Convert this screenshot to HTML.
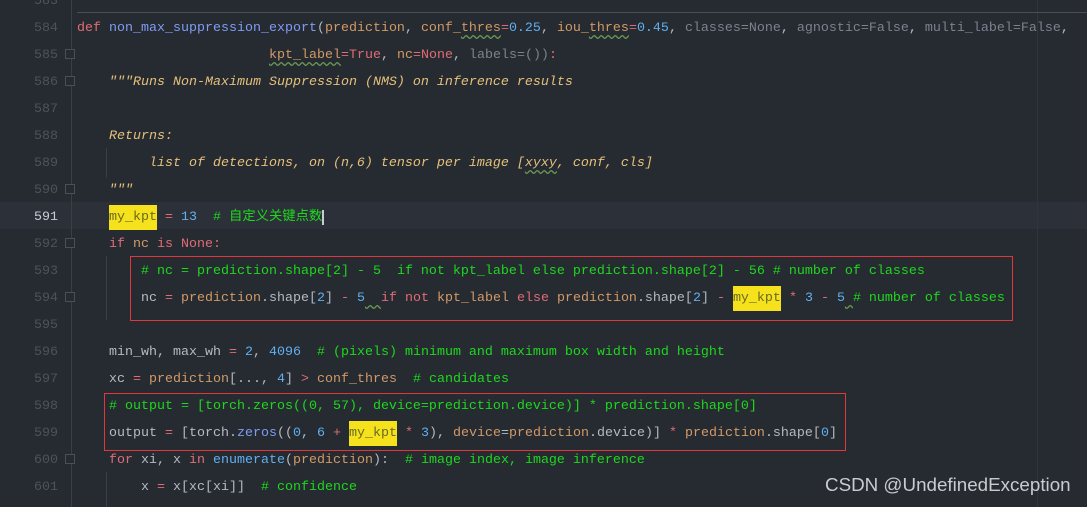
<!DOCTYPE html>
<html><head><meta charset="utf-8"><style>
html,body{margin:0;padding:0;width:1087px;height:507px;overflow:hidden;background:#262a31;}
.wrap{position:relative;width:1087px;height:507px;}
.ln{position:absolute;left:0;width:58px;text-align:right;font:13.33px "Liberation Mono",monospace;line-height:27px;color:#4d535c;height:27px;margin-top:2px;}
.code{position:absolute;left:77px;height:27px;font:13.33px "Liberation Mono","Noto Sans CJK SC",monospace;line-height:27px;color:#b4bac4;white-space:pre;margin-top:2px;}
.hl{position:absolute;left:0;width:1087px;height:27px;background:#2c3139;}
.k{color:#e06c75}.f{color:#7f9cf5}.p{color:#d19a66}.n{color:#61afef}.d{color:#e5c07b;font-style:italic}.c{color:#1ed81e}.g{color:#7b838f}.y{background:#f5e21c;color:#6b6a20;padding:5px 0}
.sq{text-decoration:underline wavy #6a9955;text-underline-offset:3px}
.box{position:absolute;border:1.5px solid #e0373a;box-sizing:border-box;}
.vline{position:absolute;width:1px;background:#3a3f47;}
.fold{position:absolute;left:65px;width:10px;height:10px;border:1px solid #4a4f57;box-sizing:border-box;background:#262a31;}
</style></head><body><div class="wrap">
<div class="hl" style="top:202px"></div>
<div class="vline" style="left:71px;top:0;height:507px"></div>
<div class="vline" style="left:1037px;top:0;height:507px;background:#30353d"></div>
<div style="position:absolute;left:77px;top:12px;width:1010px;height:1px;background:#4a4f57"></div>
<div class="vline" style="left:106px;top:148px;height:30px"></div>
<div class="vline" style="left:106px;top:256px;height:64px"></div>
<div class="vline" style="left:106px;top:472px;height:35px"></div>
<div class="fold" style="top:49px"></div><div class="fold" style="top:76px"></div>
<div class="fold" style="top:184px"></div><div class="fold" style="top:238px"></div>
<div class="fold" style="top:292px"></div><div class="fold" style="top:454px"></div>

<div class="ln" style="top:-14px">583</div>
<div class="ln" style="top:13px">584</div>
<div class="ln" style="top:40px">585</div>
<div class="ln" style="top:67px">586</div>
<div class="ln" style="top:94px">587</div>
<div class="ln" style="top:121px">588</div>
<div class="ln" style="top:148px">589</div>
<div class="ln" style="top:175px">590</div>
<div class="ln" style="top:202px;color:#c8ccd2">591</div>
<div class="ln" style="top:229px">592</div>
<div class="ln" style="top:256px">593</div>
<div class="ln" style="top:283px">594</div>
<div class="ln" style="top:310px">595</div>
<div class="ln" style="top:337px">596</div>
<div class="ln" style="top:364px">597</div>
<div class="ln" style="top:391px">598</div>
<div class="ln" style="top:418px">599</div>
<div class="ln" style="top:445px">600</div>
<div class="ln" style="top:472px">601</div>

<div class="code" style="top:13px"><span class="k">def</span> <span class="f">non_max_suppression_export</span>(<span class="p">prediction</span>, <span class="p">conf_<span class="sq">thres</span></span><span class="k">=</span><span class="n">0.25</span>, <span class="p">iou_<span class="sq">thres</span></span><span class="k">=</span><span class="n">0.45</span>, <span class="g">classes=None</span>, <span class="g">agnostic=</span><span class="g">False</span>, <span class="g">multi_label=False</span>,</div>
<div class="code" style="top:40px">                        <span class="p sq">kpt_label</span><span class="k">=True</span>, <span class="p">nc</span><span class="k">=None</span>, <span class="g">labels=())</span><span class="k">:</span></div>
<div class="code" style="top:67px">    <span class="d">"""Runs Non-Maximum Suppression (NMS) on inference results</span></div>
<div class="code" style="top:121px">    <span class="d">Returns:</span></div>
<div class="code" style="top:148px">         <span class="d">list of detections, on (n,6) tensor per image [<span class="sq">xyxy</span>, conf, cls]</span></div>
<div class="code" style="top:175px">    <span class="d">"""</span></div>
<div class="code" style="top:202px">    <span class="y">my_kpt</span> <span class="k">=</span> <span class="n">13</span>  <span class="c"># 自定义关键点数</span><span style="border-left:2px solid #c8ccd2"></span></div>
<div class="code" style="top:229px">    <span class="k">if</span> <span class="p">nc</span> <span class="k">is</span> <span class="k">None</span><span class="k">:</span></div>
<div class="code" style="top:256px">        <span class="c"># nc = prediction.shape[2] - 5  if not kpt_label else prediction.shape[2] - 56 # number of classes</span></div>
<div class="code" style="top:283px">        nc <span class="k">=</span> <span class="p">prediction</span>.shape[<span class="n">2</span>] <span class="k">-</span> <span class="n">5</span><span class="sq">  </span><span class="k">if not</span> <span class="p">kpt_label</span> <span class="k">else</span> <span class="p">prediction</span>.shape[<span class="n">2</span>] <span class="k">-</span> <span class="y">my_kpt</span> <span class="k">*</span> <span class="n">3</span> <span class="k">-</span> <span class="n">5</span><span class="sq"> </span><span class="c"># number of classes</span></div>
<div class="code" style="top:337px">    min_wh, max_wh <span class="k">=</span> <span class="n">2</span>, <span class="n">4096</span>  <span class="c"># (pixels) minimum and maximum box width and height</span></div>
<div class="code" style="top:364px">    xc <span class="k">=</span> <span class="p">prediction</span>[..., <span class="n">4</span>] <span class="k">&gt;</span> <span class="p">conf_thres</span>  <span class="c"># candidates</span></div>
<div class="code" style="top:391px">    <span class="c"># output = [torch.zeros((0, 57), device=prediction.device)] * prediction.shape[0]</span></div>
<div class="code" style="top:418px">    output <span class="k">=</span> [torch.<span class="f">zeros</span>((<span class="n">0</span>, <span class="n">6</span> <span class="k">+</span> <span class="y">my_kpt</span> <span class="k">*</span> <span class="n">3</span>), <span class="p">device</span>=<span class="p">prediction</span>.device)] <span class="k">*</span> <span class="p">prediction</span>.shape[<span class="n">0</span>]</div>
<div class="code" style="top:445px">    <span class="k">for</span> xi, x <span class="k">in</span> <span class="n">enumerate</span>(<span class="p">prediction</span>):  <span class="c"># image index, image inference</span></div>
<div class="code" style="top:472px">        x <span class="k">=</span> x[xc[xi]]  <span class="c"># confidence</span></div>

<div class="box" style="left:130px;top:256px;width:883px;height:65px"></div>
<div class="box" style="left:104px;top:393px;width:742px;height:58px"></div>
<div style="position:absolute;left:825px;top:474px;font:18.8px 'Liberation Sans',sans-serif;color:#c9cbce;white-space:nowrap">CSDN @UndefinedException</div>
</div></body></html>
